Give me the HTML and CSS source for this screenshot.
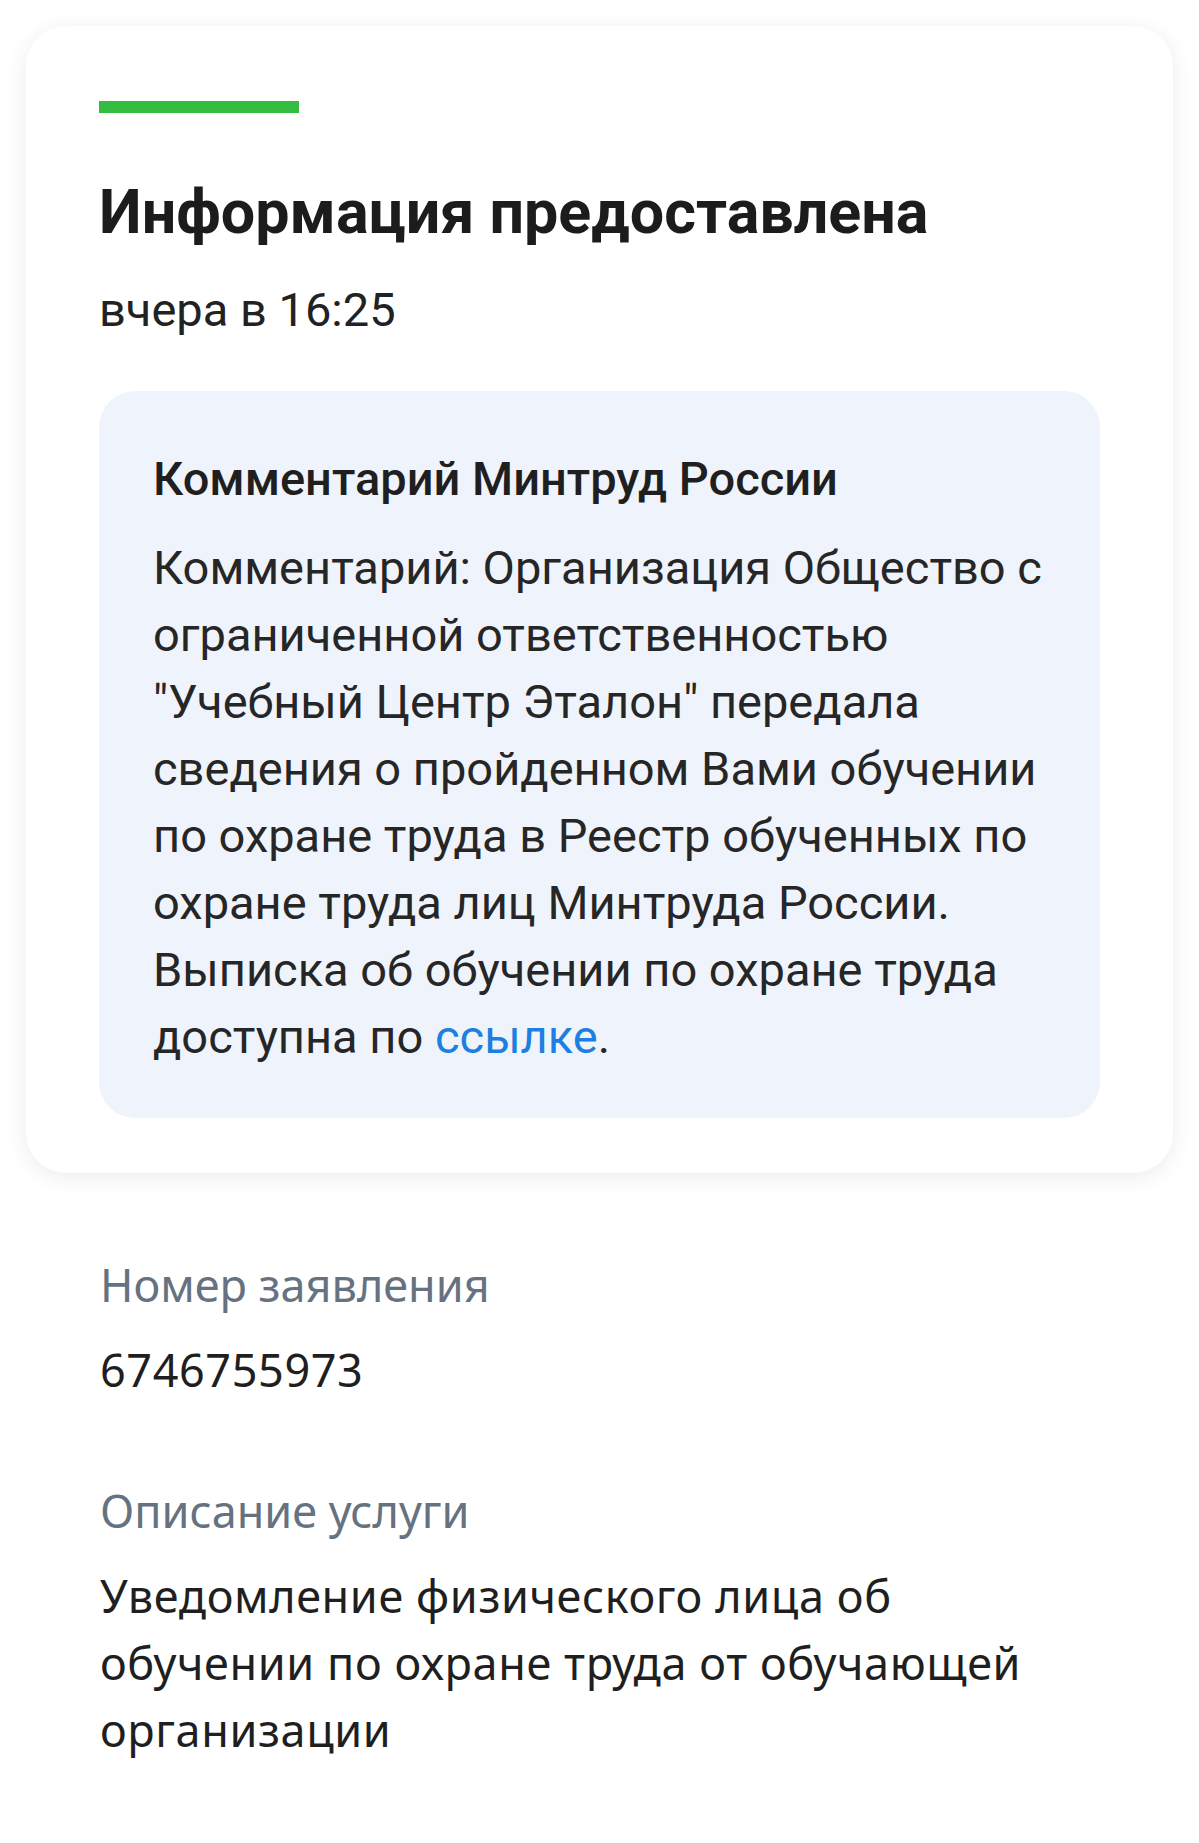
FILE: index.html
```html
<!DOCTYPE html>
<html lang="ru">
<head>
    <meta charset="UTF-8">
    <meta name="viewport" content="width=device-width, initial-scale=1.0">
    <title>Информация предоставлена</title>
    <link rel="stylesheet" href="styles.css">
</head>
<body>

    <!-- Status card -->
    <div class="card">
        <div class="status-bar"></div>
        <h1 class="card-title">Информация предоставлена</h1>
        <p class="card-date">вчера в 16:25</p>

        <div class="comment">
            <h3>Комментарий Минтруд России</h3>
            <p>Комментарий: Организация Общество с ограниченной ответственностью "Учебный Центр Эталон" передала сведения о пройденном Вами обучении по охране труда в Реестр обученных по охране труда лиц Минтруда России. Выписка об обучении по охране труда доступна по <a href="#">ссылке</a>.</p>
        </div>
    </div>

    <!-- Application details -->
    <div class="details">
        <div class="field">
            <div class="field-label">Номер заявления</div>
            <div class="field-value">6746755973</div>
        </div>
        <div class="field">
            <div class="field-label">Описание услуги</div>
            <div class="field-value">Уведомление физического лица об обучении по охране труда от обучающей организации</div>
        </div>
    </div>

</body>
</html>
```

FILE: styles.css
```css
body {
    margin: 0;
    padding: 0;
    background-color: #fff;
    font-family: Roboto, "Noto Sans", sans-serif;
    color: #1f1f1f;
}

/* Card */
.card {
    margin: 26px 26px 0;
    padding: 75px 73px 55px;
    background-color: #fff;
    border-radius: 40px;
    box-shadow: 0 4px 22px rgba(0, 0, 0, 0.08);
}

.status-bar {
    width: 200px;
    height: 12px;
    background-color: #32bd3f;
}

.card-title {
    margin: 59px 0 0;
    font-size: 61px;
    line-height: 80px;
    font-weight: 700;
    color: #1c1c1c;
}

.card-date {
    margin: 25px 0 0;
    font-size: 47px;
    line-height: 66px;
    color: #222;
}

/* Comment box */
.comment {
    margin-top: 48px;
    padding: 55px 46px 48px 54px;
    background-color: #eff3fb;
    border-radius: 36px;
}

.comment h3 {
    margin: 0;
    font-size: 47px;
    line-height: 66px;
    font-weight: 500;
    color: #1f1f1f;
}

.comment p {
    margin: 22px 0 0;
    font-size: 47px;
    line-height: 67px;
    color: #262626;
}

.comment a {
    color: #1d7fe0;
    text-decoration: none;
}

/* Details */
.details {
    padding: 78px 130px 60px 100px;
    font-family: "Noto Sans", sans-serif;
}

.field {
    margin-bottom: 74px;
}

.field-label {
    font-size: 45px;
    line-height: 67px;
    color: #66727f;
}

.field-value {
    margin-top: 18px;
    font-size: 45px;
    line-height: 67px;
    letter-spacing: 0.6px;
    color: #1f1f1f;
}
```
